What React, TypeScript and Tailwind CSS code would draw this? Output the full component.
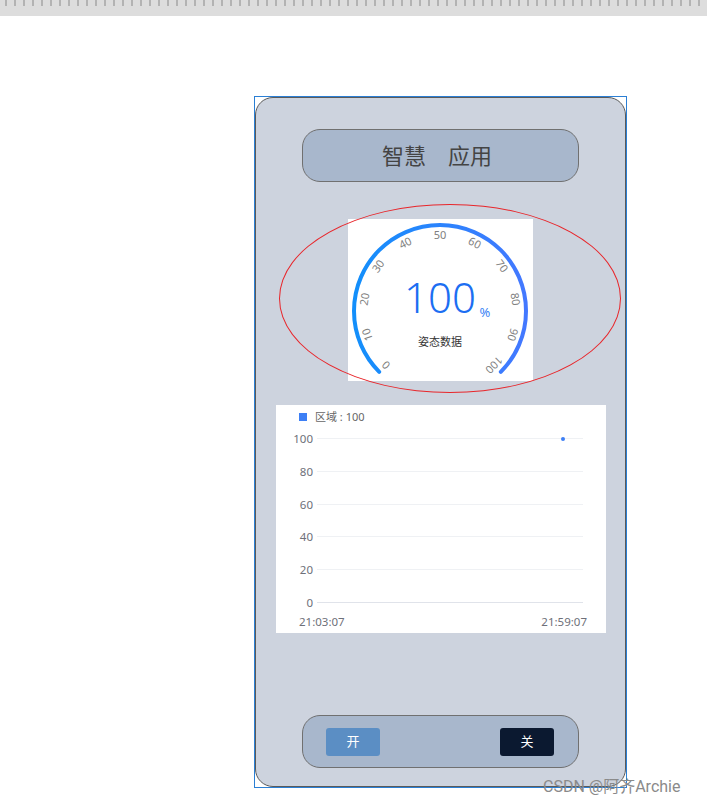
import React from 'react';

const FONT = '"Noto Sans", "Noto Sans CJK SC", sans-serif';

// gauge geometry, in the coordinates of the white 185x162 box
const CX = 92;
const CY = 92;
const R = 86;

function polar(r: number, deg: number) {
  const a = (deg * Math.PI) / 180;
  return { x: CX + r * Math.cos(a), y: CY - r * Math.sin(a) };
}

function Gauge() {
  const start = polar(R, 225);
  const end = polar(R, -45);
  const ticks = [0, 10, 20, 30, 40, 50, 60, 70, 80, 90, 100];

  return (
    <svg width="185" height="162" viewBox="0 0 185 162" style={{ fontFamily: FONT }}>
      <defs>
        <linearGradient id="arc" x1="0" y1="0" x2="1" y2="0">
          <stop offset="0" stopColor="#138ffb" />
          <stop offset="1" stopColor="#4378ff" />
        </linearGradient>
      </defs>
      <path
        d={`M ${start.x} ${start.y} A ${R} ${R} 0 1 1 ${end.x} ${end.y}`}
        fill="none"
        stroke="url(#arc)"
        strokeWidth="4"
        strokeLinecap="round"
      />
      {ticks.map((v) => {
        const deg = 225 - 2.7 * v;
        const p = polar(77, deg);
        return (
          <text
            key={v}
            x={p.x}
            y={p.y}
            fontSize="11"
            fill="#808080"
            textAnchor="middle"
            dominantBaseline="central"
            transform={`rotate(${90 - deg} ${p.x} ${p.y})`}
          >
            {v}
          </text>
        );
      })}
      <text x="92" y="77" fontSize="42" fontWeight="300" fill="#1c6ef2" textAnchor="middle" dominantBaseline="central">
        100
      </text>
      <text x="137" y="93" fontSize="13" fill="#3a84f5" textAnchor="middle" dominantBaseline="central">
        %
      </text>
      <text x="92" y="122" fontSize="11" fill="#333" textAnchor="middle" dominantBaseline="central">
        姿态数据
      </text>
    </svg>
  );
}

function LineChart() {
  const rows = [
    { v: 100, y: 33 },
    { v: 80, y: 66 },
    { v: 60, y: 99 },
    { v: 40, y: 131 },
    { v: 20, y: 164 },
    { v: 0, y: 197 },
  ];

  return (
    <svg width="330" height="228" viewBox="0 0 330 228" style={{ fontFamily: FONT }}>
      <rect x="23" y="8" width="8" height="8" fill="#3d7ff5" />
      <text x="39" y="11" fontSize="11" fill="#666" dominantBaseline="central">
        区域 : 100
      </text>
      {rows.map((r) => (
        <g key={r.v}>
          <line x1="41" x2="307" y1={r.y + 0.5} y2={r.y + 0.5} stroke={r.v === 0 ? '#e0e3ea' : '#eff1f4'} />
          <text x="37" y={r.y} fontSize="11.5" fill="#6e7079" textAnchor="end" dominantBaseline="central">
            {r.v}
          </text>
        </g>
      ))}
      <circle cx="287" cy="34" r="2" fill="#3d7ff5" />
      <text x="23" y="216" fontSize="11.5" fill="#6e7079" dominantBaseline="central">
        21:03:07
      </text>
      <text x="311" y="216" fontSize="11.5" fill="#6e7079" textAnchor="end" dominantBaseline="central">
        21:59:07
      </text>
    </svg>
  );
}

export default function App() {
  return (
    <div className="relative w-[707px] h-[805px] bg-white overflow-hidden" style={{ fontFamily: FONT }}>
      {/* ruler */}
      <div className="h-[16px] bg-[#dddddd] flex gap-[7px] pl-[5px]">
        {Array.from({ length: 79 }).map((_, i) => (
          <div key={i} className="w-[2px] h-[6px] bg-[#b3b3b3] shrink-0" />
        ))}
      </div>

      {/* selected phone frame */}
      <div className="ml-[254px] mt-[80px] w-[373px] h-[692px] border border-[#2b7fd4]">
        <div className="relative h-full rounded-[18px] border border-[#5a5a5a] bg-[#cdd3de] flex flex-col items-center pt-[31px]">
          <div className="w-[277px] h-[53px] rounded-[18px] border border-[#707070] bg-[#a8b7cc] flex items-center justify-center pr-[7px]">
            <span className="text-[22px] text-[#444]">智慧　应用</span>
          </div>

          <div className="mt-[37px] w-[185px] h-[162px] bg-white">
            <Gauge />
          </div>

          <div className="mt-[24px] w-[330px] h-[228px] bg-white">
            <LineChart />
          </div>

          <div className="mt-[82px] w-[277px] h-[53px] rounded-[18px] border border-[#707070] bg-[#a8b7cc] flex items-center justify-between pl-[23px] pr-[24px]">
            <button className="w-[54px] h-[28px] rounded-[3px] bg-[#5b8ec4] text-white text-[13px]">开</button>
            <button className="w-[54px] h-[28px] rounded-[3px] bg-[#0b1930] text-white text-[13px]">关</button>
          </div>

          {/* red annotation ellipse */}
          <div className="absolute left-[23px] top-[106px] w-[342px] h-[189px] rounded-[50%] border border-[#e8262b] pointer-events-none" />
        </div>
      </div>

      {/* watermark */}
      <div className="absolute left-[543px] top-[776px] text-[16px] text-[#8a8a8a] leading-[22px] whitespace-nowrap" style={{ fontFamily: 'Roboto, "Noto Sans CJK SC", sans-serif' }}>
        CSDN @阿齐Archie
      </div>
    </div>
  );
}
